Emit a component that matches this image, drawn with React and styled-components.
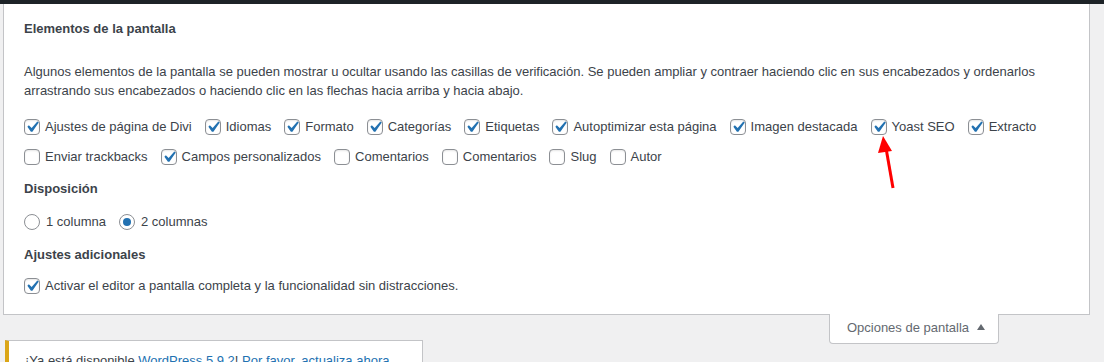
import React from "react";
import styled, { createGlobalStyle } from "styled-components";

const Global = createGlobalStyle`
  html, body {
    margin: 0;
    padding: 0;
    background: #f0f0f1;
    font-family: "Liberation Sans", Arial, sans-serif;
    font-size: 13px;
    color: #3c434a;
    overflow: hidden;
  }
`;

const Page = styled.div`
  position: relative;
  width: 1104px;
  height: 362px;
  overflow: hidden;
`;

const TopBar = styled.div`
  height: 4px;
  background: #1d2327;
`;

const Panel = styled.div`
  margin-left: 3px;
  width: 1087px;
  background: #fff;
  border: 1px solid #c3c4c7;
  border-top: none;
  padding: 16px 20px 13px 20px;
  box-sizing: border-box;
`;

const Heading = styled.h5`
  margin: ${({ $top }) => $top || 0}px 0 0;
  font-size: 13px;
  font-weight: 600;
  line-height: 18px;
  height: 18px;
  color: #3c434a;
`;

const Para = styled.p`
  margin: 24px 0 0;
  line-height: 19px;
`;

const Row = styled.div`
  display: flex;
  align-items: center;
  height: 30px;
  margin-top: ${({ $top }) => $top || 0}px;
`;

const Label = styled.label`
  display: inline-flex;
  align-items: center;
  margin-right: ${({ $gap }) => ($gap === undefined ? 13 : $gap)}px;
  white-space: nowrap;
  line-height: 18px;
`;

const Box = styled.span`
  position: relative;
  width: 16px;
  height: 16px;
  box-sizing: border-box;
  border: 1px solid #8c8f94;
  border-radius: 4px;
  margin-right: 5px;
  flex: none;
  background: #fff;
  box-shadow: inset 0 1px 2px rgba(0, 0, 0, 0.1);
  svg {
    position: absolute;
    left: -4px;
    top: -4px;
  }
`;

const Round = styled.span`
  position: relative;
  width: 16px;
  height: 16px;
  box-sizing: border-box;
  border: 1px solid #8c8f94;
  border-radius: 50%;
  margin-right: 6px;
  flex: none;
  background: #fff;
  &::after {
    content: "";
    display: ${({ $on }) => ($on ? "block" : "none")};
    position: absolute;
    left: 3px;
    top: 3px;
    width: 8px;
    height: 8px;
    border-radius: 50%;
    background: #2271b1;
  }
`;

const TabRow = styled.div`
  display: flex;
  justify-content: flex-end;
  padding-right: 105px;
  margin-top: -1px;
`;

const Tab = styled.button`
  width: 170px;
  height: 30px;
  box-sizing: border-box;
  background: #fff;
  border: 1px solid #c3c4c7;
  border-top: none;
  border-radius: 0 0 4px 4px;
  font: inherit;
  color: #646970;
  padding: 0 0 2px 4px;
  display: flex;
  align-items: center;
  justify-content: center;
  gap: 8px;
`;

const Caret = styled.span`
  width: 0;
  height: 0;
  border-left: 4px solid transparent;
  border-right: 4px solid transparent;
  border-bottom: 6px solid #646970;
  margin-bottom: 2px;
`;

const Notice = styled.div`
  margin: -4px 0 0 5px;
  width: 418px;
  box-sizing: border-box;
  background: #fff;
  border: 1px solid #c3c4c7;
  border-left: 4px solid #dba617;
  padding: 10px 12px 10px 16px;
  line-height: 19px;
  white-space: nowrap;
  a {
    color: #2271b1;
    text-decoration: underline;
  }
`;

const Arrow = styled.svg`
  position: absolute;
  left: 872px;
  top: 130px;
`;

function Check() {
  return (
    <svg width="22" height="22" viewBox="0 0 20 20">
      <path
        d="M14.83 4.89l1.34.94-5.81 8.38H9.02L5.78 9.67l1.34-1.25 2.57 2.4z"
        fill="#2271b1"
      />
    </svg>
  );
}

function Item({ label, on, gap }) {
  return (
    <Label $gap={gap}>
      <Box>{on && <Check />}</Box>
      {label}
    </Label>
  );
}

const rowOne = [
  ["Ajustes de página de Divi", true],
  ["Idiomas", true],
  ["Formato", true],
  ["Categorías", true],
  ["Etiquetas", true],
  ["Autoptimizar esta página", true],
  ["Imagen destacada", true],
  ["Yoast SEO", true],
  ["Extracto", true],
];

const rowTwo = [
  ["Enviar trackbacks", false],
  ["Campos personalizados", true],
  ["Comentarios", false],
  ["Comentarios", false],
  ["Slug", false],
  ["Autor", false],
];

export default function App() {
  return (
    <Page>
      <Global />
      <TopBar />
      <Panel>
        <Heading>Elementos de la pantalla</Heading>
        <Para>
          Algunos elementos de la pantalla se pueden mostrar u ocultar usando las casillas de
          verificación. Se pueden ampliar y contraer haciendo clic en sus encabezados y ordenarlos
          <br />
          arrastrando sus encabezados o haciendo clic en las flechas hacia arriba y hacia abajo.
        </Para>
        <Row $top={12}>
          {rowOne.map(([l, on], i) => (
            <Item key={i} label={l} on={on} />
          ))}
        </Row>
        <Row>
          {rowTwo.map(([l, on], i) => (
            <Item key={i} label={l} on={on} />
          ))}
        </Row>
        <Heading $top={8}>Disposición</Heading>
        <Row $top={9}>
          <Label $gap={13}>
            <Round />1 columna
          </Label>
          <Label>
            <Round $on />2 columnas
          </Label>
        </Row>
        <Heading $top={9}>Ajustes adicionales</Heading>
        <Row $top={7}>
          <Item label="Activar el editor a pantalla completa y la funcionalidad sin distracciones." on />
        </Row>
      </Panel>
      <TabRow>
        <Tab>
          Opciones de pantalla <Caret />
        </Tab>
      </TabRow>
      <Notice>
        ¡Ya está disponible <a>WordPress 5.9.2</a>! <a>Por favor, actualiza ahora</a>.
      </Notice>
      <Arrow width="30" height="64" viewBox="0 0 30 64">
        <line x1="21" y1="58" x2="14" y2="18" stroke="#f00" strokeWidth="3" />
        <polygon points="11,6 6,23 20,21" fill="#f00" />
      </Arrow>
    </Page>
  );
}
